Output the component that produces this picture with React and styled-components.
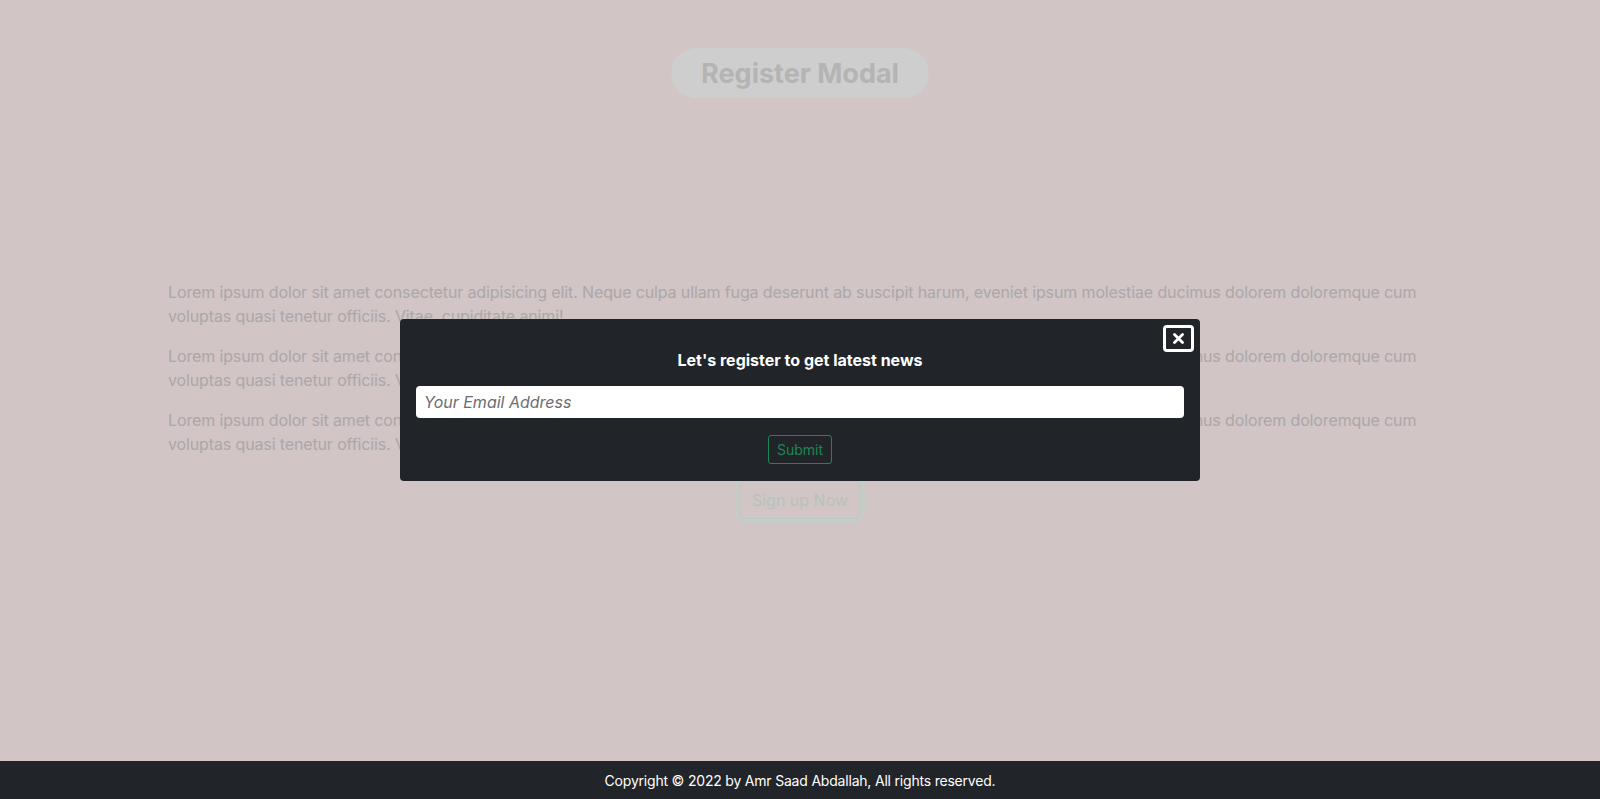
import React from "react";
import styled, { createGlobalStyle } from "styled-components";

const GlobalStyle = createGlobalStyle`
  html, body { margin: 0; padding: 0; }
  body {
    font-family: Inter, "Noto Sans", "Liberation Sans", sans-serif;
    background: #d1c5c5;
  }
  * { box-sizing: border-box; }
`;

const Page = styled.div`
  min-height: 100vh;
  display: flex;
  flex-direction: column;
`;

const Main = styled.main`
  flex: 1;
  display: flex;
  flex-direction: column;
  align-items: center;
  padding-top: 48px;
`;

const HeaderButton = styled.button`
  height: 50px;
  padding: 0 30px;
  border: none;
  border-radius: 25px;
  background: #cecece;
  color: #b4b4b4;
  font-family: inherit;
  font-size: 27px;
  font-weight: 700;
`;

const Content = styled.section`
  width: 1264px;
  margin-top: 182px;
`;

const Paragraph = styled.p`
  margin: 0 0 16px;
  font-size: 16px;
  line-height: 24px;
  letter-spacing: -0.13px;
  color: #a9a8aa;
`;

const SignUp = styled.button`
  display: block;
  margin: 25px auto 0;
  height: 38px;
  padding: 0 12px;
  font-family: inherit;
  font-size: 16px;
  color: #b5c3bc;
  background: transparent;
  border: 1px solid #bccac3;
  border-radius: 6px;
  box-shadow: 0 0 0 4px #c6cdc9;
`;

const Footer = styled.footer`
  height: 38px;
  background: #212529;
  color: #ffffff;
  font-size: 14px;
  letter-spacing: -0.2px;
  display: flex;
  align-items: center;
  justify-content: center;
`;

const Overlay = styled.div`
  position: fixed;
  inset: 0;
  display: flex;
  align-items: center;
  justify-content: center;
`;

const Modal = styled.div`
  position: relative;
  width: 800px;
  background: #212529;
  border-radius: 4px;
  padding: 29px 16px 17px;
  display: flex;
  flex-direction: column;
  align-items: center;
`;

const CloseButton = styled.button`
  position: absolute;
  top: 6px;
  right: 6px;
  width: 31px;
  height: 27px;
  padding: 0;
  border: 3px solid #ffffff;
  border-radius: 4px;
  background: transparent;
  display: flex;
  align-items: center;
  justify-content: center;
`;

const Title = styled.h2`
  margin: 0;
  font-size: 16px;
  line-height: 24px;
  font-weight: 700;
  color: #ffffff;
`;

const EmailInput = styled.input`
  margin-top: 14px;
  width: 100%;
  height: 32px;
  border: none;
  border-radius: 4px;
  padding: 0 8px;
  font-family: inherit;
  font-size: 16px;
  background: #ffffff;
  &::placeholder {
    color: #6c6c72;
    font-style: italic;
  }
`;

const SubmitButton = styled.button`
  margin-top: 17px;
  height: 29px;
  padding: 0 8px;
  font-family: inherit;
  font-size: 14px;
  color: #198754;
  background: transparent;
  border: 1px solid #198754;
  border-radius: 3px;
`;

const lorem =
  "Lorem ipsum dolor sit amet consectetur adipisicing elit. Neque culpa ullam fuga deserunt ab suscipit harum, eveniet ipsum molestiae ducimus dolorem doloremque cum voluptas quasi tenetur officiis. Vitae, cupiditate animi!";

export default function App() {
  return (
    <>
      <GlobalStyle />
      <Page>
        <Main>
          <HeaderButton>Register Modal</HeaderButton>
          <Content>
            <Paragraph>{lorem}</Paragraph>
            <Paragraph>{lorem}</Paragraph>
            <Paragraph>{lorem}</Paragraph>
            <SignUp>Sign up Now</SignUp>
          </Content>
        </Main>
        <Footer>Copyright © 2022 by Amr Saad Abdallah, All rights reserved.</Footer>
      </Page>
      <Overlay>
        <Modal>
          <CloseButton aria-label="close">
            <svg width="11" height="11" viewBox="0 0 11 11">
              <path d="M1.5 1.5 L9.5 9.5 M9.5 1.5 L1.5 9.5" stroke="#fff" strokeWidth="2.8" strokeLinecap="round" />
            </svg>
          </CloseButton>
          <Title>Let's register to get latest news</Title>
          <EmailInput placeholder="Your Email Address" />
          <SubmitButton>Submit</SubmitButton>
        </Modal>
      </Overlay>
    </>
  );
}
